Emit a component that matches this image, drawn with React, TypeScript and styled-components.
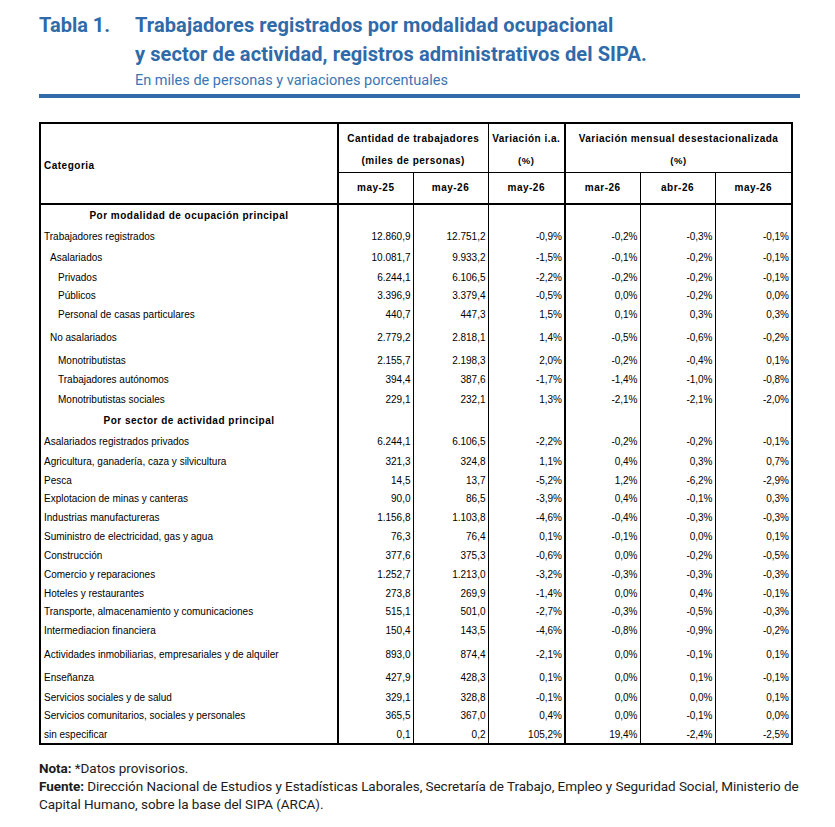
import React from "react";
import styled, { createGlobalStyle } from "styled-components";

const Global = createGlobalStyle`
  html, body { margin: 0; padding: 0; background: #ffffff; }
  body { font-family: Roboto, "Liberation Sans", Arial, sans-serif; color: #000; }
`;

const BLUE = "#2f6aa9";

const Page = styled.div`
  width: 835px;
  box-sizing: border-box;
  padding: 11px 35px 0 39px;
`;

const Heading = styled.header`
  display: grid;
  grid-template-columns: 96px 1fr;
  color: ${BLUE};
`;

const Label = styled.div`
  font: 700 20px/29px Roboto, "Liberation Sans", sans-serif;
`;

const TitleText = styled.h1`
  margin: 0;
  font: 700 20px/29px Roboto, "Liberation Sans", sans-serif;
  letter-spacing: 0.1px;
`;

const Subtitle = styled.p`
  grid-column: 2;
  margin: 3px 0 0;
  font: 400 14.5px/18px Roboto, "Liberation Sans", sans-serif;
  color: #3a75b4;
`;

const Bar = styled.div`
  height: 4px;
  margin-top: 4px;
  background: ${BLUE};
`;

const Table = styled.table`
  margin-top: 24px;
  border-collapse: collapse;
  table-layout: fixed;
  width: 752px;
  border: 2px solid #000;
  font-family: "Liberation Sans", Arial, sans-serif;
  font-size: 10px;
  color: #000;
`;

const Col = styled.col<{ $w: number }>`
  width: ${(p) => p.$w}px;
`;

const HeadRow = styled.tr<{ $h: number }>`
  height: ${(p) => p.$h}px;
`;

const HeadCell = styled.th<{
  $right?: number;
  $bottom?: number;
  $left?: boolean;
  $small?: boolean;
  $padTop?: number;
}>`
  padding: ${(p) => p.$padTop ?? 0}px 0 0 ${(p) => (p.$left ? 3 : 0)}px;
  text-align: ${(p) => (p.$left ? "left" : "center")};
  vertical-align: middle;
  font-weight: 700;
  font-size: ${(p) => (p.$small ? 9.5 : 10)}px;
  letter-spacing: 0.5px;
  white-space: nowrap;
  border-right: ${(p) => (p.$right ? `${p.$right}px solid #000` : "none")};
  border-bottom: ${(p) => (p.$bottom ? `${p.$bottom}px solid #000` : "none")};
`;

const BodyRow = styled.tr<{ $h: number }>`
  height: ${(p) => p.$h}px;
`;

const LabelCell = styled.td<{ $indent: number }>`
  padding: 0 0 0 ${(p) => [3, 9, 17][p.$indent]}px;
  text-align: left;
  vertical-align: middle;
  white-space: nowrap;
  border-right: 2px solid #000;
`;

const SectionCell = styled.td`
  padding: 0;
  text-align: center;
  vertical-align: middle;
  font-weight: 700;
  letter-spacing: 0.5px;
  white-space: nowrap;
  border-right: 2px solid #000;
`;

const NumCell = styled.td<{ $thick?: boolean }>`
  padding: 0 2px 0 0;
  text-align: right;
  vertical-align: middle;
  white-space: nowrap;
  border-right: ${(p) => (p.$thick ? 2 : 1)}px solid #000;
`;

const Notes = styled.div`
  margin-top: 14px;
  font: 400 13.5px/18px Roboto, "Liberation Sans", sans-serif;
  color: #1c1c1c;
  letter-spacing: -0.05px;
`;

const NoteLine = styled.p`
  margin: 0;
`;

const Strong = styled.strong`
  font-weight: 700;
`;

type Row =
  | { kind: "section"; label: string; h: number }
  | { kind: "data"; label: string; indent: number; v: string[]; h: number };

const rows: Row[] = [
  { kind: "section", label: "Por modalidad de ocupación principal", h: 21 },
  { kind: "data", label: "Trabajadores registrados", indent: 0, v: ["12.860,9", "12.751,2", "-0,9%", "-0,2%", "-0,3%", "-0,1%"], h: 22 },
  { kind: "data", label: "Asalariados", indent: 1, v: ["10.081,7", "9.933,2", "-1,5%", "-0,1%", "-0,2%", "-0,1%"], h: 21 },
  { kind: "data", label: "Privados", indent: 2, v: ["6.244,1", "6.106,5", "-2,2%", "-0,2%", "-0,2%", "-0,1%"], h: 18 },
  { kind: "data", label: "Públicos", indent: 2, v: ["3.396,9", "3.379,4", "-0,5%", "0,0%", "-0,2%", "0,0%"], h: 18 },
  { kind: "data", label: "Personal de casas particulares", indent: 2, v: ["440,7", "447,3", "1,5%", "0,1%", "0,3%", "0,3%"], h: 21 },
  { kind: "data", label: "No asalariados", indent: 1, v: ["2.779,2", "2.818,1", "1,4%", "-0,5%", "-0,6%", "-0,2%"], h: 25 },
  { kind: "data", label: "Monotributistas", indent: 2, v: ["2.155,7", "2.198,3", "2,0%", "-0,2%", "-0,4%", "0,1%"], h: 20 },
  { kind: "data", label: "Trabajadores autónomos", indent: 2, v: ["394,4", "387,6", "-1,7%", "-1,4%", "-1,0%", "-0,8%"], h: 19 },
  { kind: "data", label: "Monotributistas sociales", indent: 2, v: ["229,1", "232,1", "1,3%", "-2,1%", "-2,1%", "-2,0%"], h: 20 },
  { kind: "section", label: "Por sector de actividad principal", h: 22 },
  { kind: "data", label: "Asalariados registrados privados", indent: 0, v: ["6.244,1", "6.106,5", "-2,2%", "-0,2%", "-0,2%", "-0,1%"], h: 21 },
  { kind: "data", label: "Agricultura, ganadería, caza y silvicultura", indent: 0, v: ["321,3", "324,8", "1,1%", "0,4%", "0,3%", "0,7%"], h: 19 },
  { kind: "data", label: "Pesca", indent: 0, v: ["14,5", "13,7", "-5,2%", "1,2%", "-6,2%", "-2,9%"], h: 18 },
  { kind: "data", label: "Explotacion de minas y canteras", indent: 0, v: ["90,0", "86,5", "-3,9%", "0,4%", "-0,1%", "0,3%"], h: 18 },
  { kind: "data", label: "Industrias manufactureras", indent: 0, v: ["1.156,8", "1.103,8", "-4,6%", "-0,4%", "-0,3%", "-0,3%"], h: 20 },
  { kind: "data", label: "Suministro de electricidad, gas y agua", indent: 0, v: ["76,3", "76,4", "0,1%", "-0,1%", "0,0%", "0,1%"], h: 19 },
  { kind: "data", label: "Construcción", indent: 0, v: ["377,6", "375,3", "-0,6%", "0,0%", "-0,2%", "-0,5%"], h: 19 },
  { kind: "data", label: "Comercio y reparaciones", indent: 0, v: ["1.252,7", "1.213,0", "-3,2%", "-0,3%", "-0,3%", "-0,3%"], h: 19 },
  { kind: "data", label: "Hoteles y restaurantes", indent: 0, v: ["273,8", "269,9", "-1,4%", "0,0%", "0,4%", "-0,1%"], h: 18 },
  { kind: "data", label: "Transporte, almacenamiento y comunicaciones", indent: 0, v: ["515,1", "501,0", "-2,7%", "-0,3%", "-0,5%", "-0,3%"], h: 18 },
  { kind: "data", label: "Intermediacion financiera", indent: 0, v: ["150,4", "143,5", "-4,6%", "-0,8%", "-0,9%", "-0,2%"], h: 21 },
  { kind: "data", label: "Actividades inmobiliarias, empresariales y de alquiler", indent: 0, v: ["893,0", "874,4", "-2,1%", "0,0%", "-0,1%", "0,1%"], h: 26 },
  { kind: "data", label: "Enseñanza", indent: 0, v: ["427,9", "428,3", "0,1%", "0,0%", "0,1%", "-0,1%"], h: 21 },
  { kind: "data", label: "Servicios sociales y de salud", indent: 0, v: ["329,1", "328,8", "-0,1%", "0,0%", "0,0%", "0,1%"], h: 18 },
  { kind: "data", label: "Servicios comunitarios, sociales y personales", indent: 0, v: ["365,5", "367,0", "0,4%", "0,0%", "-0,1%", "0,0%"], h: 19 },
  { kind: "data", label: "sin especificar", indent: 0, v: ["0,1", "0,2", "105,2%", "19,4%", "-2,4%", "-2,5%"], h: 19 },
];

const colWidths = [298, 75, 75, 77, 75, 75, 77];

export default function App() {
  return (
    <>
      <Global />
      <Page>
        <Heading>
          <Label>Tabla 1.</Label>
          <TitleText>
            Trabajadores registrados por modalidad ocupacional
            <br />y sector de actividad, registros administrativos del SIPA.
          </TitleText>
          <Subtitle>En miles de personas y variaciones porcentuales</Subtitle>
        </Heading>
        <Bar />
        <Table>
          <colgroup>
            {colWidths.map((w, i) => (
              <Col key={i} $w={w} />
            ))}
          </colgroup>
          <thead>
            <HeadRow $h={27}>
              <HeadCell rowSpan={3} $left $right={2} $bottom={2} $padTop={4}>
                Categoria
              </HeadCell>
              <HeadCell colSpan={2} $right={1} $padTop={2}>
                Cantidad de trabajadores
              </HeadCell>
              <HeadCell $right={2} $padTop={2}>Variación i.a.</HeadCell>
              <HeadCell colSpan={3} $padTop={2}>Variación mensual desestacionalizada</HeadCell>
            </HeadRow>
            <HeadRow $h={22}>
              <HeadCell colSpan={2} $right={1} $bottom={1}>(miles de personas)</HeadCell>
              <HeadCell $right={2} $bottom={1} $small>(%)</HeadCell>
              <HeadCell colSpan={3} $bottom={1} $small>(%)</HeadCell>
            </HeadRow>
            <HeadRow $h={32}>
              <HeadCell $right={1} $bottom={2}>may-25</HeadCell>
              <HeadCell $right={1} $bottom={2}>may-26</HeadCell>
              <HeadCell $right={2} $bottom={2}>may-26</HeadCell>
              <HeadCell $right={1} $bottom={2}>mar-26</HeadCell>
              <HeadCell $right={1} $bottom={2}>abr-26</HeadCell>
              <HeadCell $bottom={2}>may-26</HeadCell>
            </HeadRow>
          </thead>
          <tbody>
            {rows.map((r, i) =>
              r.kind === "section" ? (
                <BodyRow key={i} $h={r.h}>
                  <SectionCell>{r.label}</SectionCell>
                  <NumCell />
                  <NumCell />
                  <NumCell $thick />
                  <NumCell />
                  <NumCell />
                  <NumCell />
                </BodyRow>
              ) : (
                <BodyRow key={i} $h={r.h}>
                  <LabelCell $indent={r.indent}>{r.label}</LabelCell>
                  {r.v.map((v, j) => (
                    <NumCell key={j} $thick={j === 2}>
                      {v}
                    </NumCell>
                  ))}
                </BodyRow>
              )
            )}
          </tbody>
        </Table>
        <Notes>
          <NoteLine>
            <Strong>Nota:</Strong> *Datos provisorios.
          </NoteLine>
          <NoteLine>
            <Strong>Fuente:</Strong> Dirección Nacional de Estudios y Estadísticas Laborales, Secretaría de Trabajo, Empleo y Seguridad Social, Ministerio de
            <br />
            Capital Humano, sobre la base del SIPA (ARCA).
          </NoteLine>
        </Notes>
      </Page>
    </>
  );
}
